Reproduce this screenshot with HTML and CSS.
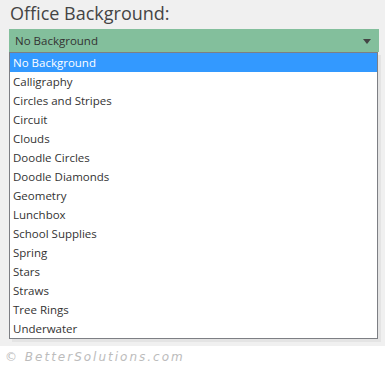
FILE: index.html
```html
<!DOCTYPE html>
<html lang="en">
<head>
    <meta charset="UTF-8">
    <title>Office Background</title>
    <link rel="stylesheet" href="styles.css">
</head>
<body>
    <div class="panel">
        <h1 class="label">Office Background:</h1>
        <div class="combo">
            <span>No Background</span>
            <svg class="arrow" width="8" height="5" viewBox="0 0 8 5"><path d="M0 0H8L4 5Z" fill="#444"/></svg>
        </div>
        <ul class="options">
            <li class="selected">No Background</li>
            <li>Calligraphy</li>
            <li>Circles and Stripes</li>
            <li>Circuit</li>
            <li>Clouds</li>
            <li>Doodle Circles</li>
            <li>Doodle Diamonds</li>
            <li>Geometry</li>
            <li>Lunchbox</li>
            <li>School Supplies</li>
            <li>Spring</li>
            <li>Stars</li>
            <li>Straws</li>
            <li>Tree Rings</li>
            <li>Underwater</li>
        </ul>
    </div>
    <p class="credit">&copy; BetterSolutions.com</p>
</body>
</html>
```

FILE: styles.css
```css
body {
    margin: 0;
    font-family: 'Open Sans', 'Noto Sans', sans-serif;
    background: #ffffff;
}

.panel {
    background: #f0f0f0;
    padding: 0 6px 8px 9px;
    height: 338px;
}

.label {
    margin: 0;
    height: 29px;
    font-size: 18px;
    font-weight: normal;
    color: #444444;
    line-height: 27px;
    padding-left: 1px;
}

.combo {
    display: flex;
    justify-content: space-between;
    align-items: center;
    height: 23px;
    padding: 0 8px 0 6px;
    background: #83bf9c;
    color: #333333;
    font-size: 11.5px;
}

.arrow {
    margin-top: 1px;
}

.options {
    list-style: none;
    margin: 0;
    padding: 0;
    width: 367px;
    background: #ffffff;
    border: 1px solid #7d7f84;
    box-shadow: 3px 3px 0 #e4e4e4;
}

.options li {
    height: 19px;
    line-height: 19px;
    padding-left: 3px;
    font-size: 11.5px;
    color: #333333;
}

.options li.selected {
    background: #3399ff;
    color: #ffffff;
}

.credit {
    margin: 4px 0 0 5px;
    font-family: 'DejaVu Sans', sans-serif;
    font-style: italic;
    font-size: 12px;
    letter-spacing: 2px;
    color: #bcbcbc;
}
```
